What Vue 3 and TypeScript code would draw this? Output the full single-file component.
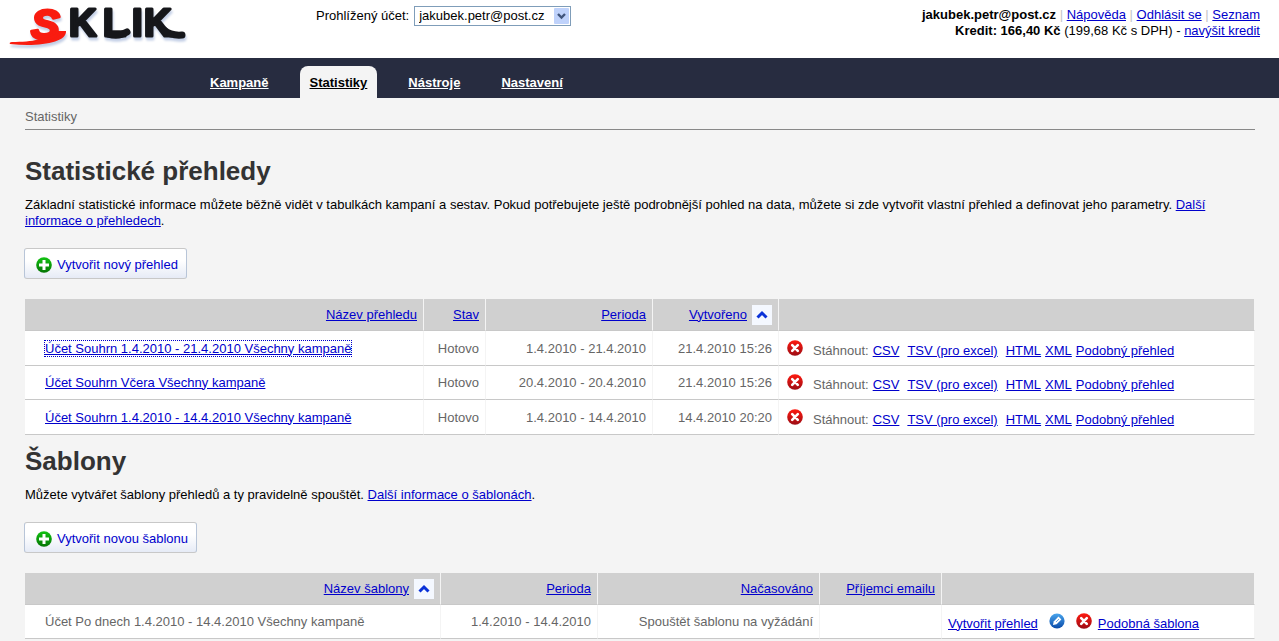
<script setup lang="ts">
interface Report {
  name: string
  period: string
  created: string
  focused?: boolean
}

const tabs: { label: string; active?: boolean }[] = [
  { label: 'Kampaně' },
  { label: 'Statistiky', active: true },
  { label: 'Nástroje' },
  { label: 'Nastavení' },
]

const reports: Report[] = [
  { name: 'Účet Souhrn 1.4.2010 - 21.4.2010 Všechny kampaně', period: '1.4.2010 - 21.4.2010', created: '21.4.2010 15:26', focused: true },
  { name: 'Účet Souhrn Včera Všechny kampaně', period: '20.4.2010 - 20.4.2010', created: '21.4.2010 15:26' },
  { name: 'Účet Souhrn 1.4.2010 - 14.4.2010 Všechny kampaně', period: '1.4.2010 - 14.4.2010', created: '14.4.2010 20:20' },
]
</script>

<template>
  <svg class="defs" aria-hidden="true">
    <defs>
      <linearGradient id="red" x1="0" y1="0" x2="0" y2="1">
        <stop offset="0" stop-color="#ff1a10" />
        <stop offset="1" stop-color="#9c0c14" />
      </linearGradient>
      <linearGradient id="green" x1="0" y1="0" x2="0" y2="1">
        <stop offset="0" stop-color="#12c412" />
        <stop offset="1" stop-color="#047404" />
      </linearGradient>
      <linearGradient id="blue" x1="0" y1="0" x2="0" y2="1">
        <stop offset="0" stop-color="#4aa6ee" />
        <stop offset="1" stop-color="#0a4aa8" />
      </linearGradient>
      <symbol id="i-delete" viewBox="0 0 16 16">
        <circle cx="8" cy="8" r="7.8" fill="url(#red)" />
        <path d="M5.2 5.2l5.6 5.6M10.8 5.2l-5.6 5.6" stroke="#fff" stroke-width="2.6" stroke-linecap="round" />
      </symbol>
      <symbol id="i-add" viewBox="0 0 16 16">
        <circle cx="8" cy="8" r="7.8" fill="url(#green)" />
        <path d="M8 3v10M3 8h10" stroke="#fff" stroke-width="3" />
      </symbol>
      <symbol id="i-edit" viewBox="0 0 16 16">
        <circle cx="8" cy="8" r="7.6" fill="url(#blue)" />
        <path d="M4 12l.7-3.6 4.8-4.8 2.9 2.9-4.8 4.8z" fill="#fff" />
        <path d="M7 9l3-3" stroke="#6aaae8" stroke-width="1" />
      </symbol>
      <symbol id="i-up" viewBox="0 0 20 20">
        <path d="M5.5 12.5L10 8l4.500 4.500" fill="none" stroke="#0a32d8" stroke-width="3" />
      </symbol>
    </defs>
  </svg>

  <header class="top">
    <a class="logo" href="#" aria-label="Sklik">
      <svg width="180" height="52" viewBox="8 0 180 52">
        <path class="swoosh" d="M66 31C67 43 38 47 10 44C9 43 10 42 12 42C32 42 49 39 55 31Z" />
        <text class="initial" x="31" y="39">S</text>
        <text class="mark" x="69 103 132 144" y="36">KLIK</text>
        <path class="flourish" d="M108 34Q119 37 127 32M164 30Q171 36 182 35" />
      </svg>
    </a>
    <form class="account">
      <label for="account">Prohlížený účet:</label>
      <span class="picker">
        <select id="account">
          <option>jakubek.petr@post.cz</option>
        </select>
        <svg class="arrow" width="15" height="16" viewBox="0 0 15 16" aria-hidden="true">
          <rect width="15" height="16" rx="1" fill="#bfd2fb" />
          <path d="M4 6l3.500 3.500L11 6" fill="none" stroke="#41557c" stroke-width="2.400" />
        </svg>
      </span>
    </form>
    <div class="user">
      <div><b>jakubek.petr@post.cz</b> <i>|</i> <a href="#">Nápověda</a> <i>|</i> <a href="#">Odhlásit se</a> <i>|</i> <a href="#">Seznam</a></div>
      <div><b>Kredit: 166,40 Kč</b> (199,68 Kč s DPH) - <a href="#">navýšit kredit</a></div>
    </div>
  </header>

  <nav class="tabs">
    <a v-for="tab in tabs" :key="tab.label" href="#" :class="{ active: tab.active }">{{ tab.label }}</a>
  </nav>

  <main class="content">
    <div class="crumb">Statistiky</div>

    <section>
      <h1>Statistické přehledy</h1>
      <p>Základní statistické informace můžete běžně vidět v tabulkách kampaní a sestav. Pokud potřebujete ještě podrobnější pohled na data, můžete si zde vytvořit vlastní přehled a definovat jeho parametry. <a href="#">Další informace o přehledech</a>.</p>
      <button type="button" class="create"><svg><use href="#i-add" /></svg>Vytvořit nový přehled</button>
      <table class="reports">
        <colgroup><col class="c-name" /><col class="c-state" /><col class="c-period" /><col class="c-created" /><col /></colgroup>
        <thead>
          <tr>
            <th><a href="#">Název přehledu</a></th>
            <th><a href="#">Stav</a></th>
            <th><a href="#">Perioda</a></th>
            <th><span class="sorted"><a href="#">Vytvořeno</a><svg class="sort"><use href="#i-up" /></svg></span></th>
            <th></th>
          </tr>
        </thead>
        <tbody>
          <tr v-for="report in reports" :key="report.name">
            <td class="name"><a href="#" :class="{ focused: report.focused }">{{ report.name }}</a></td>
            <td>Hotovo</td>
            <td>{{ report.period }}</td>
            <td>{{ report.created }}</td>
            <td class="actions">
              <div class="row">
                <button type="button" class="icon" aria-label="Smazat"><svg><use href="#i-delete" /></svg></button>
                <span class="download">Stáhnout:</span>
                <span class="formats"><a href="#">CSV</a><a href="#">TSV (pro excel)</a><a href="#">HTML</a></span>
                <a href="#">XML</a>
                <a href="#">Podobný přehled</a>
              </div>
            </td>
          </tr>
        </tbody>
      </table>
    </section>

    <section>
      <h1>Šablony</h1>
      <p>Můžete vytvářet šablony přehledů a ty pravidelně spouštět. <a href="#">Další informace o šablonách</a>.</p>
      <button type="button" class="create"><svg><use href="#i-add" /></svg>Vytvořit novou šablonu</button>
      <table class="templates">
        <colgroup><col class="c-name" /><col class="c-period" /><col class="c-timing" /><col class="c-mail" /><col /></colgroup>
        <thead>
          <tr>
            <th><span class="sorted"><a href="#">Název šablony</a><svg class="sort"><use href="#i-up" /></svg></span></th>
            <th><a href="#">Perioda</a></th>
            <th><a href="#">Načasováno</a></th>
            <th><a href="#">Příjemci emailu</a></th>
            <th></th>
          </tr>
        </thead>
        <tbody>
          <tr>
            <td class="name">Účet Po dnech 1.4.2010 - 14.4.2010 Všechny kampaně</td>
            <td>1.4.2010 - 14.4.2010</td>
            <td>Spouštět šablonu na vyžádání</td>
            <td></td>
            <td class="actions">
              <div class="row template-row">
                <a href="#">Vytvořit přehled</a>
                <button type="button" class="icon" aria-label="Upravit"><svg><use href="#i-edit" /></svg></button>
                <button type="button" class="icon" aria-label="Smazat"><svg><use href="#i-delete" /></svg></button>
                <a href="#">Podobná šablona</a>
              </div>
            </td>
          </tr>
        </tbody>
      </table>
    </section>
  </main>
</template>

<style>
body {
  margin: 0;
  background: #f4f4f4;
  color: #000;
  font: 13px/16px "Liberation Sans", Arial, sans-serif;
}
</style>

<style scoped>
.defs { position: absolute; width: 0; height: 0; }
a { color: #0000cc; }
button, select { font: inherit; }

.top {
  display: grid;
  grid-template-columns: 308px 1fr auto;
  align-items: start;
  min-height: 58px;
  padding: 0 19px 0 8px;
  background: #fff;
}
.logo svg { display: block; overflow: visible; filter: drop-shadow(1px 3px 1px #c3cfe6); }
.mark, .initial { font-family: "Liberation Sans", Arial, sans-serif; font-weight: bold; stroke-linejoin: round; }
.mark { font-size: 38px; fill: #16171b; stroke: #16171b; stroke-width: 3; }
.initial { font-size: 43px; font-style: italic; fill: #f91c10; stroke: #f91c10; stroke-width: 3; }
.swoosh { fill: #f91c10; }
.flourish { fill: none; stroke: #16171b; stroke-width: 7; stroke-linecap: round; }
.account { display: flex; align-items: center; gap: 5px; padding-top: 6px; white-space: nowrap; }
.picker { display: inline-flex; align-items: center; position: relative; }
.picker select {
  appearance: none;
  height: 20px;
  padding: 0 25px 0 4px;
  border: 1px solid #7f9db9;
  border-radius: 0;
  background: #fff;
  color: #000;
}
.arrow { position: absolute; right: 2px; pointer-events: none; }
.user { padding-top: 7px; text-align: right; white-space: nowrap; }
.user i { color: #c4c4c4; font-style: normal; }

.tabs {
  display: flex;
  align-items: flex-end;
  gap: 21px;
  height: 40px;
  padding-left: 200px;
  background: #272c40;
}
.tabs a {
  height: 32px;
  padding: 0 10px;
  border-radius: 8px 8px 0 0;
  color: #fff;
  font-weight: bold;
  line-height: 33px;
}
.tabs .active { background: #f4f4f4; color: #000; }

.content { padding: 0 24px 0 25px; }
.crumb { padding: 11px 0 4px; border-bottom: 1px solid #888; color: #666; }
h1 { margin: 0; color: #333; font-size: 26px; line-height: 32px; }
.crumb + section { padding-top: 25px; }
section + section { padding-top: 10px; }
p { margin: 10px 0 19px; }

.create {
  display: flex;
  align-items: center;
  gap: 5px;
  height: 31px;
  margin-left: -1px;
  padding: 2px 8px 0 11px;
  border: 1px solid #b8c5d8;
  border-top-color: #c8c8c8;
  border-bottom-color: #c8c8c8;
  border-radius: 3px;
  background: linear-gradient(#fff 40%, #e6ebf6);
  color: #0000cc;
}
.create svg, .icon svg { display: block; width: 16px; height: 16px; }

table {
  width: 100%;
  margin-top: 20px;
  border-collapse: separate;
  border-spacing: 0;
  table-layout: fixed;
}
th, td {
  box-sizing: border-box;
  padding: 0 6px;
  border-right: 1px solid #f4f4f4;
  border-bottom: 1px solid #c8c8c8;
  text-align: right;
  font-weight: normal;
  white-space: nowrap;
}
th { height: 32px; background: #d0d0d0; }
td { height: 34px; background: #fff; color: #666; }
.reports tbody tr:nth-child(odd) td { height: 35px; padding-top: 1px; }
.name { padding-left: 20px; text-align: left; }
.focused, .focused:focus { outline: 1px dotted #0000cc; }
.sorted { display: inline-flex; align-items: center; gap: 5px; vertical-align: middle; }
.sort { width: 20px; height: 20px; background: #f4f8ff; }
.reports .c-name { width: 399px; }
.reports .c-state { width: 62px; }
.reports .c-period { width: 167px; }
.reports .c-created { width: 126px; }
.templates .c-name { width: 416px; }
.templates .c-period { width: 157px; }
.templates .c-timing { width: 222px; }
.templates .c-mail { width: 122px; }
.row { display: flex; align-items: center; gap: 4px; padding: 4px 0 0 2px; }
.icon { margin-bottom: 6px; padding: 0; border: 0; background: none; }
.download { margin-left: 6px; }
.formats { display: flex; gap: 8px; }
.template-row { gap: 6px; padding-left: 0; }
.template-row .icon { margin-left: 5px; }
</style>
